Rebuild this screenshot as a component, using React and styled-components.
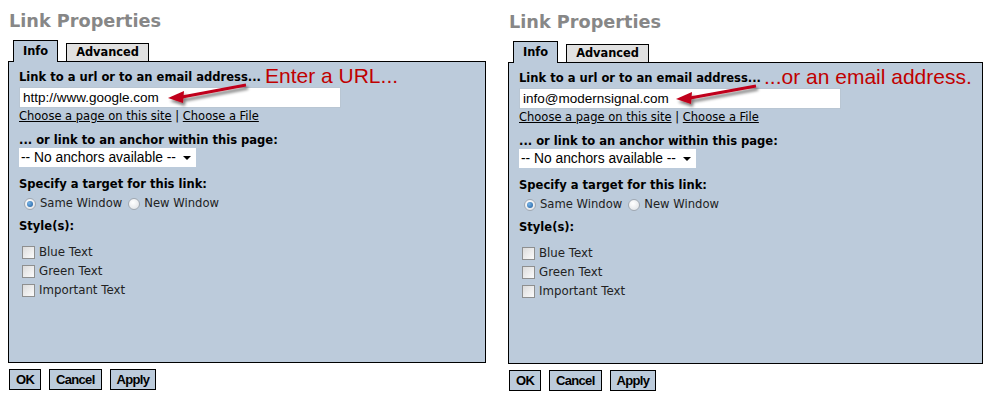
import React from "react";
import styled, { createGlobalStyle } from "styled-components";

const Global = createGlobalStyle`
  html, body { margin: 0; padding: 0; background: #fff; }
  body { font-family: "DejaVu Sans", Verdana, sans-serif; }
`;

const Page = styled.div`
  display: flex;
  align-items: flex-start;
  gap: 22px;
  padding: 0 0 0 8px;
  width: 996px;
  height: 393px;
  box-sizing: border-box;
`;

const Dialog = styled.div`
  display: flex;
  flex-direction: column;
  width: ${(p) => p.$w}px;
  margin-top: ${(p) => p.$top}px;
`;

const Title = styled.h2`
  margin: 10px 0 0 1px;
  font-family: "DejaVu Sans", Verdana, sans-serif;
  font-weight: bold;
  font-size: 17.7px;
  line-height: 22px;
  color: #878787;
`;

const Tabs = styled.div`
  display: flex;
  align-items: flex-end;
  gap: 8px;
  padding-left: 5px;
  margin-top: 8px;
  margin-bottom: -1px;
  position: relative;
  z-index: 1;
`;

const Tab = styled.div`
  box-sizing: border-box;
  border: 1px solid #000;
  border-bottom: ${(p) => (p.$active ? "none" : "1px solid #000")};
  background: ${(p) => (p.$active ? "#bccbdb" : "#e1e1e1")};
  height: ${(p) => (p.$active ? 22 : 19)}px;
  padding: ${(p) => (p.$active ? "3px 9px 0" : "1px 9px 0")};
  font-weight: bold;
  font-size: 11.4px;
  color: #000;
`;

const Panel = styled.div`
  position: relative;
  box-sizing: border-box;
  height: 302px;
  border: 1px solid #000;
  background: #bccbdb;
  padding: 8px 10px 0;
  display: flex;
  flex-direction: column;
`;

const Label = styled.div`
  font-weight: bold;
  font-size: 11.55px;
  line-height: 15px;
  color: #000;
  margin-top: ${(p) => p.$mt || 0}px;
`;

const TextInput = styled.div`
  box-sizing: border-box;
  width: 322px;
  height: 21px;
  margin-top: 2px;
  background: #fff;
  border: 1px solid #b9c6d3;
  padding: 2px 3px 0;
  font-family: "Liberation Sans", Arial, sans-serif;
  font-size: 13.5px;
  color: #000;
`;

const LinkRow = styled.div`
  font-size: 11.5px;
  line-height: 15px;
  color: #000;
  margin-top: 1px;
  a { color: #000; text-decoration: underline; }
`;

const Select = styled.div`
  box-sizing: border-box;
  width: 177px;
  height: 19px;
  margin-top: 0;
  background: #fff;
  display: flex;
  align-items: center;
  justify-content: space-between;
  padding: 0 5px 0 2px;
  font-family: "Liberation Sans", Arial, sans-serif;
  font-size: 13.8px;
  color: #000;
`;

const Caret = styled.span`
  width: 0;
  height: 0;
  border-left: 4px solid transparent;
  border-right: 4px solid transparent;
  border-top: 4px solid #000;
`;

const OptionRow = styled.div`
  display: flex;
  align-items: center;
  gap: 4px;
  font-size: ${(p) => p.$fs || 11.8}px;
  line-height: 15px;
  color: #222;
`;

const RadioRow = styled.div`
  display: flex;
  align-items: center;
  gap: 6px;
  margin-top: 4px;
  margin-left: 5px;
`;

const Radio = styled.span`
  box-sizing: border-box;
  width: 12px;
  height: 12px;
  border-radius: 50%;
  border: 1px solid #a0a8b2;
  background: radial-gradient(circle at 40% 35%, #ffffff, #dcdfe3);
  display: inline-flex;
  align-items: center;
  justify-content: center;
  &::after {
    content: "";
    display: ${(p) => (p.$checked ? "block" : "none")};
    width: 6px;
    height: 6px;
    border-radius: 50%;
    background: radial-gradient(circle at 35% 35%, #7ab6e8, #1c5a9c);
  }
`;

const Checks = styled.div`
  display: flex;
  flex-direction: column;
  gap: 4px;
  margin-top: 11px;
  margin-left: 3px;
`;

const Checkbox = styled.span`
  box-sizing: border-box;
  width: 13px;
  height: 13px;
  border: 1px solid #8e8f8f;
  background: linear-gradient(135deg, #dcdcdc, #fbfbfb);
`;

const Note = styled.div`
  position: absolute;
  left: ${(p) => p.$x}px;
  top: ${(p) => p.$y}px;
  font-family: "Liberation Sans", Arial, sans-serif;
  font-size: 21px;
  line-height: 24px;
  color: #c00000;
  white-space: nowrap;
`;

const ArrowSvg = styled.svg`
  position: absolute;
  left: ${(p) => p.$x}px;
  top: ${(p) => p.$y}px;
  overflow: visible;
`;

const Buttons = styled.div`
  display: flex;
  gap: 8px;
  margin-top: 6px;
  margin-left: 1px;
`;

const Button = styled.button`
  box-sizing: border-box;
  height: 21px;
  padding: 0 6px;
  border: 1px solid #000;
  background: #bccbdb;
  font-family: "Liberation Sans", Arial, sans-serif;
  font-weight: bold;
  font-size: 13px;
  letter-spacing: -0.7px;
  color: #000;
`;

function Arrow({ id, x, y, len, rise }) {
  return (
    <ArrowSvg $x={x} $y={y} width={len} height={20}>
      <defs>
        <filter id={id} x="-20%" y="-100%" width="140%" height="400%">
          <feGaussianBlur in="SourceAlpha" stdDeviation="1.6" />
          <feOffset dx="2" dy="3" />
          <feComponentTransfer>
            <feFuncA type="linear" slope="0.5" />
          </feComponentTransfer>
          <feMerge>
            <feMergeNode />
            <feMergeNode in="SourceGraphic" />
          </feMerge>
        </filter>
      </defs>
      <g filter={`url(#${id})`}>
        <line x1={len} y1={0} x2={14} y2={rise - 1} stroke="#c0001a" strokeWidth="3" />
        <polygon points={`0,${rise} 16,${rise - 7} 15,${rise + 5}`} fill="#c0001a" />
      </g>
    </ArrowSvg>
  );
}

function LinkDialog({ id, w, top, url, note, noteX, arrowX, arrowLen }) {
  return (
    <Dialog $w={w} $top={top}>
      <Title>Link Properties</Title>
      <Tabs>
        <Tab $active>Info</Tab>
        <Tab>Advanced</Tab>
      </Tabs>
      <Panel>
        <Label>Link to a url or to an email address...</Label>
        <TextInput>{url}</TextInput>
        <LinkRow>
          <a>Choose a page on this site</a> | <a>Choose a File</a>
        </LinkRow>
        <Label $mt={9}>... or link to an anchor within this page:</Label>
        <Select>
          <span>-- No anchors available --</span>
          <Caret />
        </Select>
        <Label $mt={10}>Specify a target for this link:</Label>
        <RadioRow>
          <OptionRow $fs={11.6}>
            <Radio $checked /> Same Window
          </OptionRow>
          <OptionRow $fs={11.6}>
            <Radio /> New Window
          </OptionRow>
        </RadioRow>
        <Label $mt={8}>Style(s):</Label>
        <Checks>
          <OptionRow>
            <Checkbox /> Blue Text
          </OptionRow>
          <OptionRow>
            <Checkbox /> Green Text
          </OptionRow>
          <OptionRow>
            <Checkbox /> Important Text
          </OptionRow>
        </Checks>
        <Note $x={noteX} $y={2}>{note}</Note>
        <Arrow id={id} x={arrowX} y={23} len={arrowLen} rise={13} />
      </Panel>
      <Buttons>
        <Button>OK</Button>
        <Button>Cancel</Button>
        <Button>Apply</Button>
      </Buttons>
    </Dialog>
  );
}

export default function App() {
  return (
    <>
      <Global />
      <Page>
        <LinkDialog
          id="shL"
          w={478}
          top={0}
          url="http://www.google.com"
          note="Enter a URL..."
          noteX={256}
          arrowX={159}
          arrowLen={78}
        />
        <LinkDialog
          id="shR"
          w={475}
          top={1}
          url="info@modernsignal.com"
          note="...or an email address."
          noteX={255}
          arrowX={167}
          arrowLen={80}
        />
      </Page>
    </>
  );
}
